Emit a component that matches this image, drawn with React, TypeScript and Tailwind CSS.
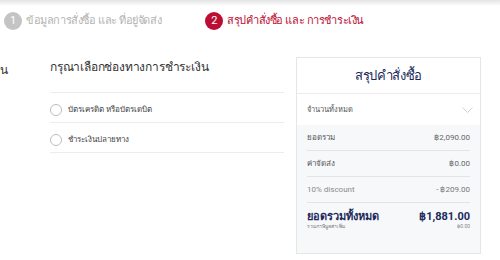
export default function App() {
  const methods = ["บัตรเครดิต หรือบัตรเดบิต", "ชำระเงินปลายทาง"];

  const rows = [
    { label: "ยอดรวม", value: "฿2,090.00", muted: false },
    { label: "ค่าจัดส่ง", value: "฿0.00", muted: false },
    { label: "10% discount", value: "- ฿209.00", muted: true },
  ];

  return (
    <div className="w-[500px] h-[260px] overflow-hidden bg-white font-['Roboto',sans-serif]">
      {/* shadow from the nav above */}
      <div className="h-[6px] bg-gradient-to-b from-[#e4e4e4] to-white" />

      {/* Steps */}
      <div className="flex items-center h-[30px] pl-[4px]">
        <div className="flex items-center gap-[4px]">
          <span className="flex items-center justify-center w-[18px] h-[18px] rounded-full bg-[#c4c4c4] text-white text-[11px]">
            1
          </span>
          <span className="text-[11px] tracking-[-0.4px] text-[#b3b3b3]">ข้อมูลการสั่งซื้อ และ ที่อยู่จัดส่ง</span>
        </div>
        <div className="flex items-center gap-[4px] ml-[44px]">
          <span className="flex items-center justify-center w-[18px] h-[18px] rounded-full bg-[#bc0e33] text-white text-[11px]">
            2
          </span>
          <span className="text-[11px] tracking-[-0.4px] font-medium text-[#bc0e33]">สรุปคำสั่งซื้อ และ การชำระเงิน</span>
        </div>
      </div>

      <div className="flex mt-[21px]">
        {/* end of the previous column */}
        <div className="w-[50px]">
          <span className="text-[12px] leading-[20px] text-[#333]">น</span>
        </div>

        {/* Payment methods */}
        <div className="w-[234px]">
          <h2 className="text-[12px] tracking-[-0.2px] leading-[20px] text-[#333] pb-[15px] border-b border-[#ececec]">
            กรุณาเลือกช่องทางการชำระเงิน
          </h2>
          {methods.map((m) => (
            <div key={m} className="flex items-center h-[30px] pt-[4px] border-b border-[#ececec]">
              <span className="w-[12px] h-[12px] rounded-full border border-[#bdbdbd] bg-white" />
              <span className="ml-[6px] text-[8px] text-[#444]">{m}</span>
            </div>
          ))}
        </div>

        {/* Order summary */}
        <div className="ml-[12px] w-[185px] h-[197px] border border-[#e6e6e6] flex flex-col">
          <div className="h-[36px] flex items-center justify-center border-b border-[#ececec]">
            <span className="text-[13px] tracking-[-0.4px] text-[#1c2a5a]">สรุปคำสั่งซื้อ</span>
          </div>
          <div className="h-[31px] flex items-center justify-between pl-[10px] pr-[7px]">
            <span className="text-[7.5px] text-[#555]">จำนวนทั้งหมด</span>
            <svg width="11" height="6" viewBox="0 0 11 6" fill="none">
              <path d="M0.5 0.5l5 5 5-5" stroke="#c8c8c8" strokeWidth="0.8" />
            </svg>
          </div>
          <div className="flex-1 bg-[#f7f8fa] px-[10px]">
            {rows.map((r) => (
              <div
                key={r.label}
                className="h-[26px] flex items-center justify-between border-b border-[#e4e4e4]"
              >
                <span className={`text-[8px] ${r.muted ? "text-[#8a8a8a]" : "text-[#555]"}`}>{r.label}</span>
                <span className={`text-[8px] ${r.muted ? "text-[#777]" : "text-[#666]"}`}>{r.value}</span>
              </div>
            ))}
            <div className="flex justify-between pt-[7px]">
              <div className="flex flex-col">
                <span className="text-[11px] leading-[13px] font-bold text-[#1c2a5a]">ยอดรวมทั้งหมด</span>
                <span className="text-[5px] leading-[7px] text-[#777]">รวมภาษีมูลค่าเพิ่ม</span>
              </div>
              <div className="flex flex-col items-end">
                <span className="text-[11px] leading-[13px] font-bold text-[#1c2a5a]">฿1,881.00</span>
                <span className="text-[5px] leading-[7px] text-[#888]">฿0.00</span>
              </div>
            </div>
          </div>
        </div>
      </div>
    </div>
  );
}
